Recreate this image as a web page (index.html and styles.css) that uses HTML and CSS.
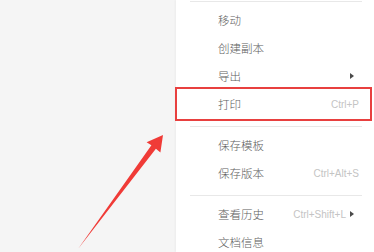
FILE: index.html
```html
<!DOCTYPE html>
<html lang="zh-CN">
<head>
    <meta charset="UTF-8">
    <title>文件菜单</title>
    <link rel="stylesheet" href="styles.css">
</head>
<body>
    <div class="page">
        <div class="canvas"></div>

        <div class="menu">
            <div class="sep sep-top"></div>
            <div class="item"><span class="label">移动</span></div>
            <div class="item"><span class="label">创建副本</span></div>
            <div class="item">
                <span class="label">导出</span>
                <span class="more"></span>
            </div>
            <div class="item">
                <span class="label">打印</span>
                <span class="key">Ctrl+P</span>
            </div>
            <div class="sep"></div>
            <div class="item"><span class="label">保存模板</span></div>
            <div class="item">
                <span class="label">保存版本</span>
                <span class="key">Ctrl+Alt+S</span>
            </div>
            <div class="sep"></div>
            <div class="item">
                <span class="label">查看历史</span>
                <span class="key">Ctrl+Shift+L</span>
                <span class="more"></span>
            </div>
            <div class="item"><span class="label">文档信息</span></div>

            <!-- рамка-пометка вокруг пункта "打印" -->
            <div class="mark-box"></div>
        </div>

        <!-- стрелка-пометка -->
        <svg class="mark-arrow" width="374" height="252" viewBox="0 0 374 252">
            <polygon points="78,249 151.4,145.2 146.6,142.2 163,135 160.4,152.6 155.9,148.8"
                     fill="#f03b37"/>
        </svg>
    </div>
</body>
</html>
```

FILE: styles.css
```css
html, body {
    margin: 0;
    padding: 0;
}
body {
    font-family: "Noto Sans CJK SC", "Liberation Sans", sans-serif;
    background-color: #f5f5f5;
}
.page {
    position: relative;
    width: 374px;
    height: 252px;
    overflow: hidden;
    display: flex;
}
.canvas {
    flex: 1;
    background-color: #f5f5f5;
}
.menu {
    position: relative;
    width: 198px;
    background-color: #fff;
    box-shadow: -1px 0 2px rgba(0,0,0,0.04);
}
.sep {
    padding: 8px 0 4px;
    margin: 0 12px 0 14px;
}
.sep::before {
    content: "";
    display: block;
    height: 1px;
    background-color: #e8e8e8;
}
.sep-top {
    padding: 1px 0 4px;
}
.item {
    display: flex;
    align-items: center;
    height: 28px;
    padding: 0 15px 0 42px;
}
.label {
    flex: 1;
    font-size: 11.5px;
    font-weight: 300;
    color: #5e5e5e;
}
.key {
    font-family: "Liberation Sans", Arial, sans-serif;
    font-size: 10px;
    color: #c4c4c4;
}
.more {
    width: 13px;
    height: 8px;
    display: flex;
    align-items: center;
    justify-content: flex-start;
    padding-left: 4px;
    box-sizing: border-box;
}
.more::before {
    content: "";
    border-left: 4px solid #4a4a4a;
    border-top: 3.5px solid transparent;
    border-bottom: 3.5px solid transparent;
}
.mark-box {
    position: absolute;
    left: -1px;
    top: 87px;
    width: 197px;
    height: 34px;
    box-sizing: border-box;
    border: 2px solid #e8403f;
}
.mark-arrow {
    position: absolute;
    left: 0;
    top: 0;
}
```
